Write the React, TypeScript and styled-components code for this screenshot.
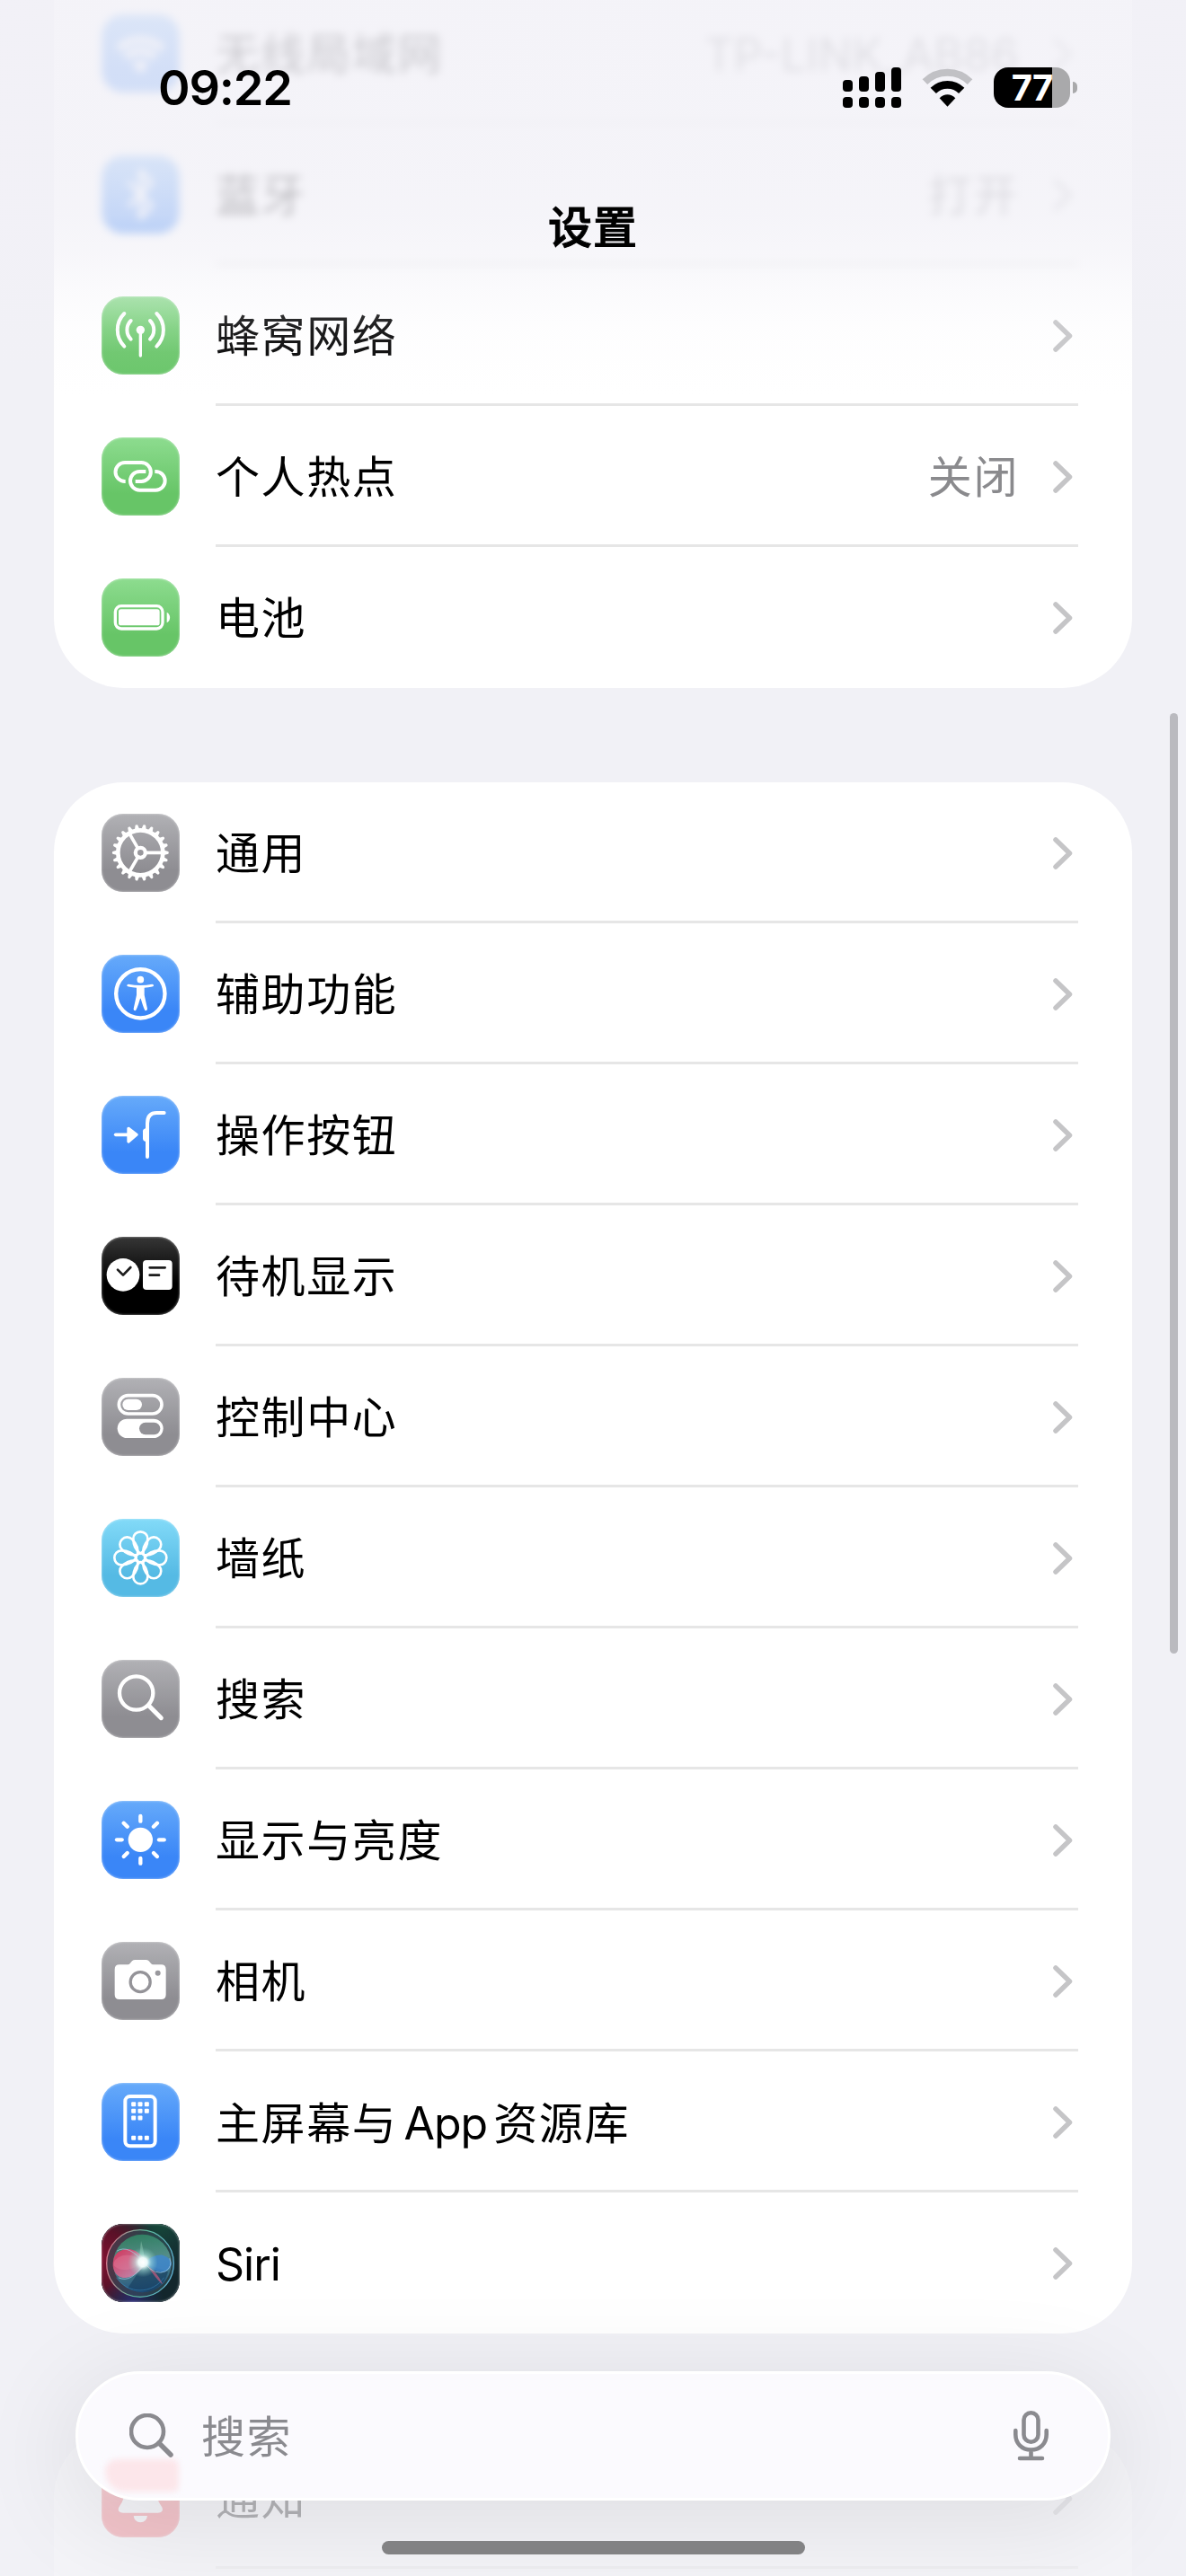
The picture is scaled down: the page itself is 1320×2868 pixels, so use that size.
import type { ReactNode } from 'react'
import styled, { createGlobalStyle, css } from 'styled-components'

type Tint = 'green' | 'blue' | 'gray' | 'black' | 'cyan' | 'red' | 'siri'

interface Item {
  label: string
  tint: Tint
  icon: ReactNode
  value?: string
  hazy?: boolean
}

const tints: Record<Tint, string> = {
  green: 'linear-gradient(#8ddc8f, #67c567 72%)',
  blue: 'linear-gradient(#66aafa, #3a86f7 72%)',
  gray: 'linear-gradient(#b1b1b5, #8e8d92 72%)',
  black: 'linear-gradient(#363636, #000 60%)',
  cyan: 'linear-gradient(#82daf8, #55bae4 72%)',
  red: 'linear-gradient(#ff6b70, #f5424c 72%)',
  siri: '#15202c',
}

const gearTeeth = Array.from({ length: 22 }, (_, i) => (i * 360) / 22)
const octants = Array.from({ length: 8 }, (_, i) => i * 45)

const WifiIcon = () => (
  <Glyph>
    <path d="M130 196L104 166A38 38 0 0 1 156 166Z" fill="#fff" />
    <path d="M81 143A70 70 0 0 1 179 143M56 115A106 106 0 0 1 204 115" strokeWidth="22" strokeLinecap="butt" />
  </Glyph>
)

const BluetoothIcon = () => (
  <Glyph>
    <path d="M92 92L168 168L130 208V52L168 92L92 168" strokeWidth="13" />
  </Glyph>
)

const CellularIcon = () => (
  <Glyph>
    <circle cx="130" cy="112" r="14" fill="#fff" stroke="none" />
    <path d="M130 112V198" strokeWidth="10" />
    <path d="M76 57A78 78 0 0 0 76 167M184 57A78 78 0 0 1 184 167M98 81A44 44 0 0 0 98 143M162 81A44 44 0 0 1 162 143" strokeWidth="12" />
  </Glyph>
)

const HotspotIcon = () => (
  <Glyph>
    <path
      d="M80 147H78A31.5 31.5 0 0 1 78 84H133A31.5 31.5 0 0 1 133 147H113M148 114H127A31 31 0 0 0 127 176H181A31 31 0 0 0 181 114H178"
      strokeWidth="12"
      strokeLinecap="butt"
    />
  </Glyph>
)

const BatteryIcon = () => (
  <Glyph>
    <rect x="46" y="92" width="158" height="76" rx="20" strokeWidth="10" />
    <rect x="57" y="103" width="137" height="54" rx="8" fill="#fff" stroke="none" />
    <path d="M218 113A20 20 0 0 1 218 148Z" fill="#fff" stroke="none" />
  </Glyph>
)

const GearIcon = () => (
  <Glyph>
    {gearTeeth.map((angle) => (
      <path key={angle} d="M205 121L223 126Q226 130 223 134L205 139Z" fill="#fff" stroke="none" transform={`rotate(${angle} 130 130)`} />
    ))}
    <circle cx="130" cy="130" r="75" strokeWidth="14" />
    <circle cx="130" cy="130" r="16.5" strokeWidth="13" />
    {[0, 120, 240].map((angle) => (
      <path key={angle} d="M150 130H200" strokeWidth="11" transform={`rotate(${angle} 130 130)`} />
    ))}
  </Glyph>
)

const AccessibilityIcon = () => (
  <Glyph>
    <circle cx="130" cy="130" r="81.5" strokeWidth="13" />
    <circle cx="130" cy="83" r="11.5" fill="#fff" stroke="none" />
    <path
      d="M90 98Q130 106 169 98Q175 98 174 104Q173 107 143 110V134L153 180Q153 187 147 187Q143 187 131 146H129Q117 187 112 187Q106 187 107 180L117 134V110Q87 107 85 104Q84 98 90 98Z"
      fill="#fff"
      stroke="none"
    />
  </Glyph>
)

const ActionIcon = () => (
  <Glyph>
    <path d="M47 130H90" strokeWidth="11" />
    <path d="M90 109L117 130L90 153Z" fill="#fff" strokeWidth="10" />
    <path d="M153 204V92Q153 57 184 57H209" strokeWidth="12" />
    <path d="M150 108Q138 110 138 118V143Q138 151 150 153Z" fill="#fff" stroke="none" />
  </Glyph>
)

const StandbyIcon = () => (
  <Glyph>
    <circle cx="72" cy="127" r="55" fill="#fff" stroke="none" />
    <rect x="138" y="78" width="98" height="99" rx="12" fill="#fff" stroke="none" />
    <path d="M54 110L72 128L97 102M161 103H212M161 128H192" stroke="#1c1c1c" strokeWidth="8" />
  </Glyph>
)

const ControlIcon = () => (
  <Glyph>
    <rect x="58" y="59" width="143" height="61" rx="30.5" strokeWidth="11" />
    <rect x="70" y="71" width="65" height="37" rx="18.5" fill="#fff" stroke="none" />
    <rect x="53" y="137" width="153" height="64" rx="32" fill="#fff" stroke="none" />
    <rect x="126" y="149" width="70" height="41" rx="20.5" fill="#929196" stroke="none" />
  </Glyph>
)

const WallpaperIcon = () => (
  <Glyph>
    {octants.map((angle) => (
      <path
        key={angle}
        d="M0-14C-18-26-24-48-24-64A24 23 0 0 1 24-64C24-48 18-26 0-14Z"
        strokeWidth="8"
        transform={`translate(130 130) rotate(${angle})`}
      />
    ))}
    <circle cx="130" cy="130" r="15" strokeWidth="8" />
  </Glyph>
)

const SearchTileIcon = () => (
  <Glyph>
    <circle cx="116" cy="111" r="56" strokeWidth="13" />
    <path d="M157 152L199 194" strokeWidth="15" />
  </Glyph>
)

const BrightnessIcon = () => (
  <Glyph>
    <circle cx="130" cy="130" r="41" fill="#fff" stroke="none" />
    {octants.map((angle) => (
      <path key={angle} d="M192 130H209" strokeWidth="13" transform={`rotate(${angle} 130 130)`} />
    ))}
  </Glyph>
)

const CameraIcon = () => (
  <Glyph>
    <path
      d="M60 76H88Q92 76 95 72L102 64Q106 60 112 60H148Q154 60 158 64L165 72Q168 76 172 76H199Q215 76 215 92V176Q215 192 199 192H60Q44 192 44 176V92Q44 76 60 76Z"
      fill="#fff"
      stroke="none"
    />
    <circle cx="129.500" cy="134" r="33" stroke="#949398" strokeWidth="10" />
    <circle cx="188" cy="104" r="9" fill="#99989d" stroke="none" />
  </Glyph>
)

const HomeScreenIcon = () => (
  <Glyph>
    <rect x="79" y="45" width="100" height="166" rx="16" strokeWidth="12" />
    {[[107, 71], [129, 71], [151, 71], [107, 94], [129, 94], [151, 94], [107, 117], [129, 117], [107, 184], [129, 184], [151, 184]].map(([x, y]) => (
      <rect key={`${x}-${y}`} x={x - 7.5} y={y - 7.5} width="15" height="15" rx="3" fill="#fff" stroke="none" />
    ))}
  </Glyph>
)

const SiriIcon = () => (
  <Glyph>
    <defs>
      <radialGradient id="siriRed" cx="0" cy=".45" r=".75">
        <stop offset="0" stopColor="#7e1230" />
        <stop offset=".5" stopColor="#5a1128" />
        <stop offset="1" stopColor="#5a1128" stopOpacity="0" />
      </radialGradient>
      <radialGradient id="siriGreen" cx=".75" cy="0" r=".7">
        <stop offset="0" stopColor="#16483a" />
        <stop offset="1" stopColor="#16383a" stopOpacity="0" />
      </radialGradient>
      <radialGradient id="siriBlue" cx=".4" cy="1" r=".4">
        <stop offset="0" stopColor="#2a2a72" />
        <stop offset="1" stopColor="#23305a" stopOpacity="0" />
      </radialGradient>
      <linearGradient id="siriOrb" x1=".4" y1="0" x2=".55" y2="1">
        <stop offset="0" stopColor="#2f8a66" />
        <stop offset=".45" stopColor="#5d9a94" />
        <stop offset="1" stopColor="#1c5488" />
      </linearGradient>
      <linearGradient id="siriRim" x1="0" y1=".4" x2="1" y2=".6">
        <stop offset="0" stopColor="#d4788c" />
        <stop offset=".5" stopColor="#5cbc9c" />
        <stop offset="1" stopColor="#5fb0d4" />
      </linearGradient>
      <linearGradient id="siriPink" x1="0" y1="0" x2="1" y2="1">
        <stop offset="0" stopColor="#e02a56" />
        <stop offset="1" stopColor="#c99cc0" />
      </linearGradient>
      <radialGradient id="siriFlare">
        <stop offset="0" stopColor="#fff" />
        <stop offset=".3" stopColor="#f2fffd" stopOpacity=".95" />
        <stop offset=".55" stopColor="#b8efe6" stopOpacity=".5" />
        <stop offset="1" stopColor="#8fd8cc" stopOpacity="0" />
      </radialGradient>
    </defs>
    <g stroke="none">
      <rect width="261" height="261" fill="#13262c" />
      <rect width="261" height="261" fill="url(#siriGreen)" />
      <rect width="261" height="261" fill="url(#siriRed)" />
      <rect width="261" height="261" fill="url(#siriBlue)" />
      <circle cx="129" cy="132" r="112" fill="#36505a" opacity=".6" />
      <circle cx="136" cy="132" r="97" fill="url(#siriOrb)" opacity=".85" />
      <path d="M142 132L88 214Q110 230 160 226Q210 210 222 160Z" fill="#163a5c" opacity=".6" />
      <path d="M150 128Q120 80 82 84Q36 92 38 140Q44 180 80 180Q120 176 150 128Z" fill="url(#siriPink)" opacity=".9" />
      <path d="M142 130Q110 98 70 106Q40 116 40 138Q60 160 100 150Z" fill="#e77c9a" opacity=".4" />
      <path d="M142 130Q170 102 204 104Q232 112 234 134Q228 160 200 162Q172 160 142 130Z" fill="#3f87cc" opacity=".85" />
      <path d="M150 136Q190 166 204 202Q186 190 150 136Z" fill="#b4577c" opacity=".8" />
      <path d="M132 56Q144 100 144 130H124Z" fill="#9fd8c0" opacity=".4" />
    </g>
    <circle cx="129" cy="132" r="112" stroke="url(#siriRim)" strokeWidth="4" />
    <path d="M50 180A95 95 0 0 0 208 180" stroke="#3c92c8" strokeWidth="3" opacity=".5" />
    <path d="M142 130Q90 66 52 90M142 130Q100 200 58 180M142 130Q180 176 214 158Q238 142 228 116" stroke="#a5cde6" strokeWidth="3" opacity=".7" />
    <circle cx="138" cy="128" r="50" fill="url(#siriFlare)" stroke="none" />
  </Glyph>
)

const BellIcon = () => (
  <Glyph>
    <path d="M130 48Q178 48 182 100Q184 136 198 154Q208 168 201 175Q197 179 188 179H72Q63 179 59 175Q52 168 62 154Q76 136 78 100Q82 48 130 48Z" fill="#fff" stroke="none" />
    <path d="M107 189H153Q150 211 130 211Q110 211 107 189Z" fill="#fff" stroke="none" />
  </Glyph>
)

const groups: Item[][] = [
  [
    { label: '无线局域网', tint: 'blue', icon: <WifiIcon />, value: 'TP-LINK_AB86', hazy: true },
    { label: '蓝牙', tint: 'blue', icon: <BluetoothIcon />, value: '打开', hazy: true },
    { label: '蜂窝网络', tint: 'green', icon: <CellularIcon /> },
    { label: '个人热点', tint: 'green', icon: <HotspotIcon />, value: '关闭' },
    { label: '电池', tint: 'green', icon: <BatteryIcon /> },
  ],
  [
    { label: '通用', tint: 'gray', icon: <GearIcon /> },
    { label: '辅助功能', tint: 'blue', icon: <AccessibilityIcon /> },
    { label: '操作按钮', tint: 'blue', icon: <ActionIcon /> },
    { label: '待机显示', tint: 'black', icon: <StandbyIcon /> },
    { label: '控制中心', tint: 'gray', icon: <ControlIcon /> },
    { label: '墙纸', tint: 'cyan', icon: <WallpaperIcon /> },
    { label: '搜索', tint: 'gray', icon: <SearchTileIcon /> },
    { label: '显示与亮度', tint: 'blue', icon: <BrightnessIcon /> },
    { label: '相机', tint: 'gray', icon: <CameraIcon /> },
    { label: '主屏幕与 App 资源库', tint: 'blue', icon: <HomeScreenIcon /> },
    { label: 'Siri', tint: 'siri', icon: <SiriIcon /> },
  ],
  [
    { label: '通知', tint: 'red', icon: <BellIcon /> },
    { label: '', tint: 'red', icon: null },
  ],
]

// Latin runs are set tighter than the Chinese around them
const MixedText = ({ text }: { text: string }) => (
  <>
    {text.split(/([\x20-\x7e]+)/).map((run, i) => (i % 2 ? <Latin key={i}>{run}</Latin> : run))}
  </>
)

const SettingsRow = ({ item }: { item: Item }) => (
  <Row $hazy={item.hazy}>
    <Tile $tint={item.tint}>{item.icon}</Tile>
    <RowBody>
      <Label>
        <MixedText text={item.label} />
      </Label>
      {item.value && (
        <Value>
          <MixedText text={item.value} />
        </Value>
      )}
      <Chevron viewBox="0 0 22 36">
        <path d="M3 3L18.500 18L3 33" />
      </Chevron>
    </RowBody>
  </Row>
)

export default function App() {
  return (
    <Screen>
      <GlobalStyle />
      <List>
        {groups.map((items, i) => (
          <Card key={i} $first={i === 0} $dimmed={i === 2}>
            {items.map((item) => (
              <SettingsRow key={item.label} item={item} />
            ))}
          </Card>
        ))}
      </List>
      <ScrollThumb />

      <Header>
        <StatusBar>
          <Clock>09:22</Clock>
          <StatusIcons>
            <svg width="65" height="45" viewBox="0 0 65 45">
              <rect x="0" y="14" width="11" height="13" rx="4" />
              <rect x="18" y="10" width="11" height="17" rx="4" />
              <rect x="36" y="5" width="11" height="22" rx="4" />
              <rect x="54" y="0" width="11" height="27" rx="4" />
              {[0, 18, 36, 54].map((x) => (
                <rect key={x} x={x} y="33" width="11" height="12" rx="4" />
              ))}
            </svg>
            <svg width="57" height="43" viewBox="0 0 58 43">
              <path d="M29 43L20 33.500Q24 29.500 29 29.500T38 33.500Z" />
              <path d="M13 25A22.500 22.500 0 0 1 45 25" fill="none" stroke="#000" strokeWidth="9" />
              <path d="M3.500 15A36 36 0 0 1 54.500 15" fill="none" stroke="#c1c1c5" strokeWidth="8" />
            </svg>
            <Battery>
              <BatteryBody>77</BatteryBody>
              <BatteryTip />
            </Battery>
          </StatusIcons>
        </StatusBar>
        <Title>设置</Title>
      </Header>

      <SearchBar>
        <Smudge />
        <svg width="50" height="50" viewBox="0 0 50 50">
          <circle cx="20" cy="20" r="18" />
          <path d="M33 33L46 46" strokeWidth="5.500" />
        </svg>
        <Placeholder>搜索</Placeholder>
        <svg width="39" height="56" viewBox="0 0 39 56">
          <rect x="11.500" y="2.300" width="16" height="32.500" rx="8" />
          <path d="M2.300 22V26.500C2.300 36 9 43.500 19.500 43.500S36.700 36 36.700 26.500V22M19.500 44V53M7 53H32" />
        </svg>
      </SearchBar>
      <HomeIndicator />
    </Screen>
  )
}

const GlobalStyle = createGlobalStyle`
  body {
    margin: 0;
    background: #f1f1f6;
  }
`

const Screen = styled.div`
  position: relative;
  width: 1320px;
  height: 2868px;
  overflow: hidden;
  background: #f1f1f6;
  font-family: Inter, 'Noto Sans CJK SC', sans-serif;
`

const List = styled.main`
  display: flex;
  flex-direction: column;
  gap: 105px;
  margin-top: -19px;
  padding: 0 60px;
`

const Card = styled.section<{ $first: boolean; $dimmed: boolean }>`
  border-radius: ${({ $first }) => ($first ? '0 0 78px 78px' : '78px')};
  background: #fff;

  ${({ $dimmed }) =>
    $dimmed &&
    css`
      opacity: 0.25;
    `}
`

const RowBody = styled.div`
  display: flex;
  flex: 1;
  align-items: center;
  height: 150px;
  padding: 4px 6px 0 0;
  border-bottom: 3px solid #e6e6e6;
`

const Row = styled.div<{ $hazy?: boolean }>`
  display: flex;
  align-items: center;
  gap: 40px;
  height: 157px;
  padding: 0 60px 0 53px;
  filter: ${({ $hazy }) => ($hazy ? 'blur(5px)' : 'none')};

  &:last-child ${RowBody} {
    border-bottom-color: transparent;
  }
`

const Tile = styled.div<{ $tint: Tint }>`
  position: relative;
  width: 87px;
  height: 87px;
  border-radius: 24px;
  overflow: hidden;
  background: ${({ $tint }) => tints[$tint]};

  &::after {
    content: '';
    position: absolute;
    inset: 0;
    border-radius: inherit;
    box-shadow: inset 0 0 2px 1px rgba(255, 255, 255, 0.28);
  }
`

const Glyph = styled.svg.attrs({ viewBox: '0 0 261 261' })`
  display: block;
  width: 87px;
  height: 87px;
  fill: none;
  stroke: #fff;
  stroke-linecap: round;
  stroke-linejoin: round;
`

const Latin = styled.span`
  font-size: 50px;
  letter-spacing: -1px;
  word-spacing: -6px;
`

const Label = styled.span`
  flex: 1;
  padding-top: 2px;
  color: #000;
  font-size: 49px;
  line-height: 60px;
  letter-spacing: 1.6px;
  white-space: pre;
`

const Value = styled.span`
  margin-right: 38px;
  padding-top: 2px;
  color: #8a8a8d;
  font-size: 49px;
  line-height: 60px;
  letter-spacing: 1.6px;

  ${Latin} {
    letter-spacing: 0;
  }
`

const Chevron = styled.svg`
  width: 22px;
  height: 36px;
  fill: none;
  stroke: #c5c5c7;
  stroke-width: 5.5;
  stroke-linecap: round;
  stroke-linejoin: round;
`

const ScrollThumb = styled.div`
  position: absolute;
  top: 794px;
  right: 9px;
  width: 9px;
  height: 1047px;
  border-radius: 5px;
  background: #bababf;
`

const Header = styled.header`
  position: absolute;
  inset: 0 0 auto;
  height: 440px;
  background: linear-gradient(
    rgba(242, 241, 247, 0.84) 0,
    rgba(242, 241, 247, 0.82) 170px,
    rgba(242, 241, 247, 0.76) 240px,
    rgba(242, 241, 247, 0.62) 280px,
    rgba(242, 241, 247, 0.32) 325px,
    rgba(242, 241, 247, 0.12) 365px,
    rgba(242, 241, 247, 0) 440px
  );
`

const StatusBar = styled.div`
  display: flex;
  justify-content: space-between;
  align-items: center;
  height: 194px;
  padding: 0 121px 0 176px;
`

const Clock = styled.span`
  padding-top: 2px;
  font-size: 54px;
  font-weight: 600;
  line-height: 60px;
  letter-spacing: -1.2px;
`

const StatusIcons = styled.div`
  display: flex;
  align-items: center;
  gap: 23px;
`

const Battery = styled.div`
  display: flex;
  align-items: center;
  gap: 3px;
`

const BatteryBody = styled.div`
  width: 85px;
  height: 45px;
  border-radius: 16px;
  background: linear-gradient(90deg, #000 65px, #a9a9ab 65px);
  color: #fff;
  font-size: 40px;
  font-weight: 700;
  line-height: 45px;
  text-align: center;
  letter-spacing: -1px;
`

const BatteryTip = styled.div`
  width: 5px;
  height: 13px;
  border-radius: 0 6px 6px 0;
  background: #a9a9ab;
`

const Title = styled.h1`
  margin: 28px 0 0;
  font-size: 49px;
  font-weight: 500;
  line-height: 64px;
  letter-spacing: 1px;
  text-align: center;
  -webkit-text-stroke: 1px #000;
`

const SearchBar = styled.div`
  position: absolute;
  top: 2640px;
  left: 84px;
  display: flex;
  align-items: center;
  box-sizing: border-box;
  width: 1152px;
  height: 144px;
  padding: 0 66px 0 57px;
  border: 3px solid #fff;
  border-radius: 72px;
  background: #fbfafe;
  box-shadow: 0 20px 110px 10px rgba(0, 0, 0, 0.085);

  svg {
    position: relative;
    fill: none;
    stroke: #8a8a8f;
    stroke-width: 4.6;
    stroke-linecap: round;
  }
`

const Smudge = styled.div`
  position: absolute;
  left: 30px;
  bottom: 7px;
  width: 82px;
  height: 36px;
  border-radius: 30px 18px 14px 50px;
  background: #fce6ea;
  filter: blur(3px);
`

const Placeholder = styled.span`
  flex: 1;
  margin-left: 30px;
  padding-top: 3px;
  color: #8a8a8f;
  font-size: 49px;
  line-height: 60px;
  letter-spacing: 1.6px;
`

const HomeIndicator = styled.div`
  position: absolute;
  bottom: 24px;
  left: 425px;
  width: 471px;
  height: 15px;
  border-radius: 8px;
  background: #828284;
`
